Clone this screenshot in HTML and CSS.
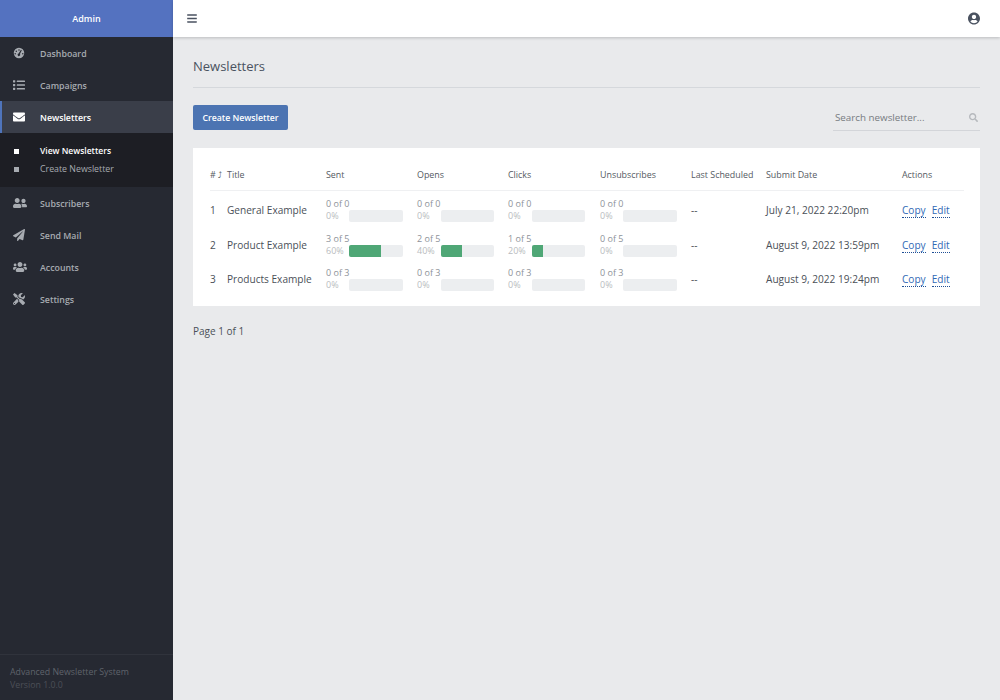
FILE: index.html
```html
<!DOCTYPE html>
<html>
<head>
  <title>Newsletters</title>
  <meta name="viewport" content="width=device-width, initial-scale=1.0">
  <link rel="stylesheet" href="styles.css">
</head>
<body>
  <aside class="sidebar">
    <div class="brand">Admin</div>
    <nav class="nav">
      <a class="nav-item" href="#">
        <svg class="nav-icon" viewBox="0 0 24 24"><path fill-rule="evenodd" d="M12 1.5a10.5 10.5 0 1 0 0 21 10.5 10.5 0 0 0 0-21zM12 4.6a1.5 1.5 0 1 1 0 3 1.5 1.5 0 0 1 0-3zM6.6 6.9a1.5 1.5 0 1 1 0 3 1.5 1.5 0 0 1 0-3zM4.4 12.2a1.5 1.5 0 1 1 0 3 1.5 1.5 0 0 1 0-3zM19.6 12.2a1.5 1.5 0 1 1 0 3 1.5 1.5 0 0 1 0-3zM17.6 6.4l-3.8 7.4a2.6 2.6 0 1 1-2.5-.8l4.6-7.5z"/></svg>
        <span>Dashboard</span>
      </a>
      <a class="nav-item" href="#">
        <svg class="nav-icon" viewBox="0 0 512 512"><path d="M80 368H16a16 16 0 0 0-16 16v64a16 16 0 0 0 16 16h64a16 16 0 0 0 16-16v-64a16 16 0 0 0-16-16zm0-320H16A16 16 0 0 0 0 64v64a16 16 0 0 0 16 16h64a16 16 0 0 0 16-16V64a16 16 0 0 0-16-16zm0 160H16a16 16 0 0 0-16 16v64a16 16 0 0 0 16 16h64a16 16 0 0 0 16-16v-64a16 16 0 0 0-16-16zm416 176H176a16 16 0 0 0-16 16v32a16 16 0 0 0 16 16h320a16 16 0 0 0 16-16v-32a16 16 0 0 0-16-16zm0-320H176a16 16 0 0 0-16 16v32a16 16 0 0 0 16 16h320a16 16 0 0 0 16-16V80a16 16 0 0 0-16-16zm0 160H176a16 16 0 0 0-16 16v32a16 16 0 0 0 16 16h320a16 16 0 0 0 16-16v-32a16 16 0 0 0-16-16z"/></svg>
        <span>Campaigns</span>
      </a>
      <a class="nav-item active" href="#">
        <svg class="nav-icon" viewBox="0 0 512 512"><path d="M502.3 190.8c3.9-3.1 9.7-.2 9.7 4.7V400c0 26.5-21.5 48-48 48H48c-26.5 0-48-21.5-48-48V195.6c0-5 5.7-7.8 9.7-4.7 22.4 17.4 52.1 39.5 154.1 113.6 21.1 15.4 56.7 47.8 92.2 47.6 35.7.3 72-32.8 92.3-47.6 102-74.1 131.6-96.3 154-113.7zM256 320c23.2.4 56.6-29.2 73.4-41.4 132.7-96.3 142.8-104.7 173.4-128.7 5.8-4.5 9.2-11.5 9.2-18.9v-19c0-26.5-21.5-48-48-48H48C21.5 64 0 85.5 0 112v19c0 7.4 3.4 14.3 9.2 18.9 30.6 23.9 40.7 32.4 173.4 128.7 16.8 12.2 50.2 41.8 73.4 41.4z"/></svg>
        <span>Newsletters</span>
      </a>
      <div class="subnav">
        <a class="sub-item active" href="#">View Newsletters</a>
        <a class="sub-item" href="#">Create Newsletter</a>
      </div>
      <a class="nav-item" href="#">
        <svg class="nav-icon wide" viewBox="0 0 640 512"><path d="M192 256c61.9 0 112-50.1 112-112S253.9 32 192 32 80 82.1 80 144s50.1 112 112 112zm76.8 32h-8.3c-20.8 10-43.9 16-68.5 16s-47.6-6-68.5-16h-8.3C51.6 288 0 339.6 0 403.2V432c0 26.5 21.5 48 48 48h288c26.5 0 48-21.5 48-48v-28.8c0-63.6-51.6-115.2-115.2-115.2zM480 256c53 0 96-43 96-96s-43-96-96-96-96 43-96 96 43 96 96 96zm48 32h-3.8c-13.9 4.8-28.6 8-44.2 8s-30.3-3.2-44.2-8H432c-20.4 0-39.2 5.9-55.7 15.4 24.4 26.3 39.7 61.2 39.7 99.8v38.4c0 2.2-.5 4.3-.6 6.4H592c26.5 0 48-21.5 48-48 0-61.9-50.1-112-112-112z"/></svg>
        <span>Subscribers</span>
      </a>
      <a class="nav-item" href="#">
        <svg class="nav-icon" viewBox="0 0 512 512"><path d="M476 3.2L12.5 270.6c-18.1 10.4-15.8 35.6 2.2 43.2L121 358.4l287.3-253.2c5.5-4.9 13.3 2.6 8.6 8.3L176 407v80.5c0 23.6 28.5 32.9 42.5 15.8L282 426l124.6 52.2c14.2 6 30.4-2.9 33-18.2l72-432C515 7.8 493.3-6.8 476 3.2z"/></svg>
        <span>Send Mail</span>
      </a>
      <a class="nav-item" href="#">
        <svg class="nav-icon wide" viewBox="0 0 640 512"><path d="M96 224c35.3 0 64-28.7 64-64s-28.7-64-64-64-64 28.7-64 64 28.7 64 64 64zm448 0c35.3 0 64-28.7 64-64s-28.7-64-64-64-64 28.7-64 64 28.7 64 64 64zm32 32h-64c-17.6 0-33.5 7.1-45.1 18.6 40.3 22.1 68.9 62 75.1 109.4h66c17.7 0 32-14.3 32-32v-32c0-35.3-28.7-64-64-64zm-256 0c61.9 0 112-50.1 112-112S381.9 32 320 32 208 82.1 208 144s50.1 112 112 112zm76.8 32h-8.3c-20.8 10-43.9 16-68.5 16s-47.6-6-68.5-16h-8.3C179.6 288 128 339.6 128 403.2V432c0 26.5 21.5 48 48 48h288c26.5 0 48-21.5 48-48v-28.8c0-63.6-51.6-115.2-115.2-115.2zm-223.7-13.4C161.5 263.1 145.6 256 128 256H64c-35.3 0-64 28.7-64 64v32c0 17.7 14.3 32 32 32h65.9c6.3-47.4 34.9-87.3 75.2-109.4z"/></svg>
        <span>Accounts</span>
      </a>
      <a class="nav-item" href="#">
        <svg class="nav-icon" viewBox="0 0 512 512"><path d="M501.1 395.7L384 278.6c-23.1-23.1-57.6-27.6-85.4-13.9L192 158.1V96L64 0 0 64l96 128h62.1l106.6 106.6c-13.6 27.8-9.2 62.3 13.9 85.4l117.1 117.1c14.6 14.6 38.2 14.6 52.7 0l52.7-52.7c14.5-14.6 14.5-38.2 0-52.7zM331.7 225c28.3 0 54.9 11 74.9 31l19.4 19.4c15.8-6.9 30.8-16.5 43.8-29.5 37.1-37.1 49.7-89.3 37.9-136.7-2.2-9-13.5-12.1-20.1-5.5l-74.4 74.4-67.9-11.3L334 98.9l74.4-74.4c6.6-6.6 3.4-17.9-5.7-20.2-47.4-11.7-99.6.9-136.6 37.9-28.5 28.5-41.9 66.1-41.2 103.6l82.1 82.1c8.1-1.9 16.5-2.9 24.7-2.9zm-103.9 82l-56.7-56.7L18.7 402.8c-25 25-25 65.5 0 90.5s65.5 25 90.5 0l123.6-123.6c-7.6-19.9-9.9-41.6-5-62.7zM64 472c-13.2 0-24-10.8-24-24 0-13.3 10.7-24 24-24s24 10.7 24 24c0 13.2-10.7 24-24 24z"/></svg>
        <span>Settings</span>
      </a>
    </nav>
    <div class="sidebar-footer">
      <div class="footer-name">Advanced Newsletter System</div>
      <div class="footer-version">Version 1.0.0</div>
    </div>
  </aside>

  <div class="page">
    <header class="topbar">
      <svg class="menu-icon" viewBox="0 0 448 512"><path d="M16 132h416c8.837 0 16-7.163 16-16V76c0-8.837-7.163-16-16-16H16C7.163 60 0 67.163 0 76v40c0 8.837 7.163 16 16 16zm0 160h416c8.837 0 16-7.163 16-16v-40c0-8.837-7.163-16-16-16H16c-8.837 0-16 7.163-16 16v40c0 8.837 7.163 16 16 16zm0 160h416c8.837 0 16-7.163 16-16v-40c0-8.837-7.163-16-16-16H16c-8.837 0-16 7.163-16 16v40c0 8.837 7.163 16 16 16z"/></svg>
      <svg class="user-icon" viewBox="0 0 496 512"><path d="M248 8C111 8 0 119 0 256s111 248 248 248 248-111 248-248S385 8 248 8zm0 96c48.6 0 88 39.4 88 88s-39.4 88-88 88-88-39.4-88-88 39.4-88 88-88zm0 344c-58.7 0-111.3-26.6-146.5-68.2 18.8-35.4 55.6-59.8 98.5-59.8 2.4 0 4.8.4 7.1 1.1 13 4.2 26.6 6.9 40.9 6.9 14.3 0 28-2.7 40.9-6.9 2.3-.7 4.7-1.1 7.1-1.1 42.9 0 79.7 24.4 98.5 59.8C359.3 421.4 306.7 448 248 448z"/></svg>
    </header>

    <main class="content">
      <h2 class="page-title">Newsletters</h2>

      <div class="toolbar">
        <a class="btn" href="#">Create Newsletter</a>
        <div class="search">
          <input type="text" placeholder="Search newsletter...">
          <svg class="search-icon" viewBox="0 0 512 512"><path d="M505 442.7L405.3 343c-4.5-4.5-10.6-7-17-7H372c27.6-35.3 44-79.7 44-128C416 93.1 322.9 0 208 0S0 93.1 0 208s93.1 208 208 208c48.3 0 92.7-16.4 128-44v16.3c0 6.4 2.5 12.5 7 17l99.7 99.7c9.4 9.4 24.6 9.4 33.9 0l28.3-28.3c9.4-9.4 9.4-24.6.1-34zM208 336c-70.7 0-128-57.2-128-128 0-70.7 57.2-128 128-128 70.7 0 128 57.2 128 128 0 70.7-57.2 128-128 128z"/></svg>
        </div>
      </div>

      <div class="card">
        <table class="table">
          <colgroup>
            <col class="col-id"><col class="col-title"><col class="col-stat"><col class="col-stat"><col class="col-clicks"><col class="col-stat"><col class="col-last"><col class="col-date"><col class="col-actions">
          </colgroup>
          <thead>
            <tr>
              <th># <span class="sort">⤴</span></th><th>Title</th><th>Sent</th><th>Opens</th><th>Clicks</th><th>Unsubscribes</th><th>Last Scheduled</th><th>Submit Date</th><th>Actions</th>
            </tr>
          </thead>
          <tbody>
            <tr>
              <td>1</td>
              <td>General Example</td>
              <td><div class="stat-count">0 of 0</div><div class="stat-row"><span class="stat-pct">0%</span><div class="bar"></div></div></td>
              <td><div class="stat-count">0 of 0</div><div class="stat-row"><span class="stat-pct">0%</span><div class="bar"></div></div></td>
              <td><div class="stat-count">0 of 0</div><div class="stat-row"><span class="stat-pct">0%</span><div class="bar"></div></div></td>
              <td><div class="stat-count">0 of 0</div><div class="stat-row"><span class="stat-pct">0%</span><div class="bar"></div></div></td>
              <td>--</td>
              <td>July 21, 2022 22:20pm</td>
              <td class="actions"><a href="#">Copy</a><a href="#">Edit</a></td>
            </tr>
            <tr>
              <td>2</td>
              <td>Product Example</td>
              <td><div class="stat-count">3 of 5</div><div class="stat-row"><span class="stat-pct">60%</span><div class="bar"><div class="bar-fill" style="width: 60%"></div></div></div></td>
              <td><div class="stat-count">2 of 5</div><div class="stat-row"><span class="stat-pct">40%</span><div class="bar"><div class="bar-fill" style="width: 40%"></div></div></div></td>
              <td><div class="stat-count">1 of 5</div><div class="stat-row"><span class="stat-pct">20%</span><div class="bar"><div class="bar-fill" style="width: 20%"></div></div></div></td>
              <td><div class="stat-count">0 of 5</div><div class="stat-row"><span class="stat-pct">0%</span><div class="bar"></div></div></td>
              <td>--</td>
              <td>August 9, 2022 13:59pm</td>
              <td class="actions"><a href="#">Copy</a><a href="#">Edit</a></td>
            </tr>
            <tr>
              <td>3</td>
              <td>Products Example</td>
              <td><div class="stat-count">0 of 3</div><div class="stat-row"><span class="stat-pct">0%</span><div class="bar"></div></div></td>
              <td><div class="stat-count">0 of 3</div><div class="stat-row"><span class="stat-pct">0%</span><div class="bar"></div></div></td>
              <td><div class="stat-count">0 of 3</div><div class="stat-row"><span class="stat-pct">0%</span><div class="bar"></div></div></td>
              <td><div class="stat-count">0 of 3</div><div class="stat-row"><span class="stat-pct">0%</span><div class="bar"></div></div></td>
              <td>--</td>
              <td>August 9, 2022 19:24pm</td>
              <td class="actions"><a href="#">Copy</a><a href="#">Edit</a></td>
            </tr>
          </tbody>
        </table>
      </div>

      <div class="pagination">Page 1 of 1</div>
    </main>
  </div>
</body>
</html>
```

FILE: styles.css
```css
* {
  margin: 0;
  padding: 0;
  box-sizing: border-box;
}

html, body {
  height: 100%;
}

body {
  display: flex;
  height: 700px;
  overflow: hidden;
  font-family: "Open Sans", sans-serif;
  font-size: 8.8px;
  background: #e9eaec;
  color: #4a4f55;
}

a {
  text-decoration: none;
}

/* Sidebar */
.sidebar {
  display: flex;
  flex-direction: column;
  width: 173px;
  flex-shrink: 0;
  background: #262932;
}

.brand {
  height: 37px;
  line-height: 37px;
  text-align: center;
  font-size: 9px;
  font-weight: 600;
  color: #fff;
  background: #5472c0;
}

.nav {
  flex: 1;
}

.nav-item {
  display: flex;
  align-items: center;
  height: 32px;
  padding-left: 13px;
  font-weight: 600;
  color: #a7abb1;
}

.nav-item span {
  margin-left: 15px;
  padding-top: 2px;
}

.nav-item.active {
  padding-left: 11px;
  border-left: 2px solid #4f74bb;
  background: #3a3e49;
  color: #fff;
}

.nav-icon {
  width: 12px;
  height: 12px;
  fill: #a7abb1;
  flex-shrink: 0;
}

.nav-icon.wide {
  width: 14px;
  margin-right: -2px;
}

.nav-item.active .nav-icon {
  fill: #fff;
}

.subnav {
  display: flex;
  flex-direction: column;
  height: 54px;
  padding-top: 9px;
  background: #1d1e24;
}

.sub-item {
  position: relative;
  height: 18px;
  line-height: 18px;
  padding-left: 40px;
  color: #a7abb1;
}

.sub-item:before {
  content: "";
  position: absolute;
  left: 14px;
  top: 7px;
  width: 5px;
  height: 5px;
  background: #a7abb1;
}

.sub-item.active {
  color: #fff;
  font-weight: 600;
  font-size: 8.5px;
}

.sub-item.active:before {
  background: #fff;
}

.sidebar-footer {
  height: 46px;
  padding: 11px 10px 0;
  border-top: 1px solid #30333c;
  line-height: 12.5px;
}

.footer-name {
  color: #5f636b;
}

.footer-version {
  color: #4c4f57;
}

/* Top bar */
.page {
  flex: 1;
  min-width: 0;
}

.topbar {
  display: flex;
  align-items: center;
  justify-content: space-between;
  height: 37px;
  padding: 0 20px 0 14px;
  background: #fff;
  box-shadow: 0 1px 3px rgba(0, 0, 0, 0.2);
}

.menu-icon {
  width: 10px;
  height: 11px;
  fill: #4a5260;
}

.user-icon {
  width: 12px;
  height: 13px;
  fill: #4a5260;
}

/* Content */
.content {
  padding: 20px 20px 0;
}

.page-title {
  height: 31px;
  font-size: 13px;
  font-weight: 400;
  line-height: 18px;
  color: #4a5260;
  border-bottom: 1px solid #d5d8dc;
}

.toolbar {
  display: flex;
  align-items: flex-start;
  justify-content: space-between;
  margin-top: 17px;
}

.btn {
  display: block;
  width: 95px;
  height: 25px;
  line-height: 26px;
  text-align: center;
  font-size: 8.7px;
  font-weight: 600;
  color: #fff;
  background: #4c74b2;
  border-radius: 2px;
}

.search {
  position: relative;
  width: 147px;
  height: 26px;
  border-bottom: 1px solid #d3d5d9;
}

.search input {
  width: 100%;
  height: 25px;
  padding: 0 20px 0 2px;
  border: none;
  outline: none;
  background: transparent;
  font-family: inherit;
  font-size: 9.8px;
}

.search input::placeholder {
  color: #777b81;
  opacity: 1;
}

.search-icon {
  position: absolute;
  right: 2px;
  top: 8px;
  width: 9px;
  height: 9px;
  fill: #b6b9bd;
}

.card {
  height: 158px;
  margin-top: 17px;
  padding: 10px 16px 0 17px;
  background: #fff;
}

.table {
  width: 754px;
  table-layout: fixed;
  border-collapse: collapse;
}

.col-id { width: 17px; }
.col-title { width: 99px; }
.col-stat { width: 91px; }
.col-clicks { width: 92px; }
.col-last { width: 75px; }
.col-date { width: 136px; }
.col-actions { width: 62px; }

.table th {
  height: 32px;
  padding-top: 1px;
  text-align: left;
  font-weight: 400;
  font-size: 8.9px;
  color: #555a62;
  white-space: nowrap;
  border-bottom: 1px solid #eff0f2;
}

.table td {
  height: 34px;
  padding-top: 6px;
  font-size: 10.1px;
  color: #4a5058;
  white-space: nowrap;
}

.table tbody tr:nth-child(2) td {
  height: 35px;
}

.table td:nth-child(4) .stat-pct,
.table td:nth-child(5) .stat-pct {
  width: 24px;
}

.table td:nth-child(4) .bar,
.table td:nth-child(5) .bar {
  width: 53px;
}

.sort {
  font-size: 8px;
}

.stat-count,
.stat-pct {
  font-size: 9px;
  line-height: 12px;
}

.stat-count {
  color: #8e9299;
}

.stat-row {
  display: flex;
  align-items: center;
}

.stat-pct {
  width: 23px;
  color: #b9bcc0;
}

.bar {
  width: 54px;
  height: 12px;
  border-radius: 2px;
  overflow: hidden;
  background: #eceef0;
}

.bar-fill {
  height: 100%;
  background: #4fa776;
}

.actions a {
  margin-right: 6px;
  color: #3169b5;
  border-bottom: 1px dotted #1f4f96;
}

.pagination {
  margin-top: 18px;
  font-size: 10px;
  color: #4a5058;
}
```
